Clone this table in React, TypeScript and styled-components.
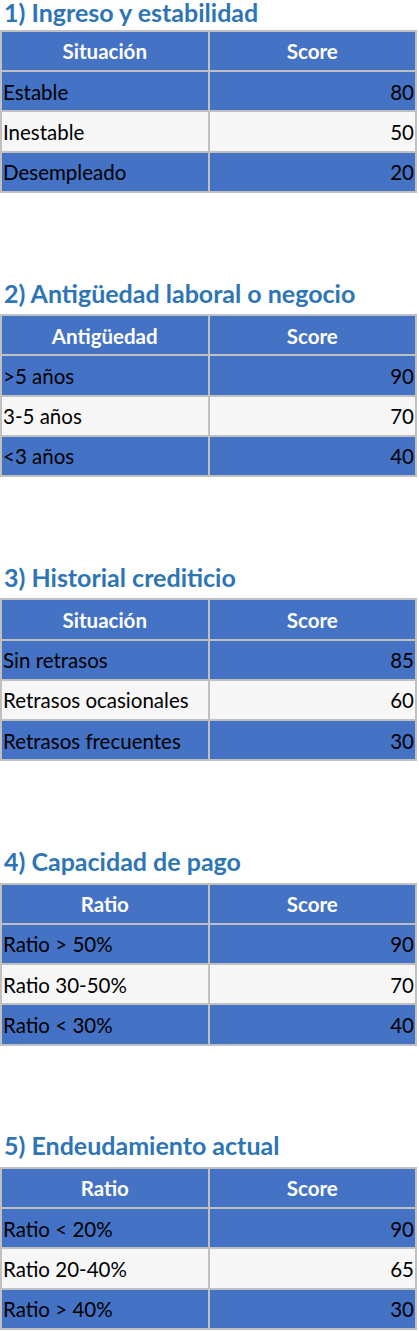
import React from 'react';
import styled, { createGlobalStyle } from 'styled-components';

type Section = {
	title: string;
	label: string;
	rows: [string, number][];
};

const sections: Section[] = [
	{
		title: '1) Ingreso y estabilidad',
		label: 'Situación',
		rows: [
			['Estable', 80],
			['Inestable', 50],
			['Desempleado', 20]
		]
	},
	{
		title: '2) Antigüedad laboral o negocio',
		label: 'Antigüedad',
		rows: [
			['>5 años', 90],
			['3-5 años', 70],
			['<3 años', 40]
		]
	},
	{
		title: '3) Historial crediticio',
		label: 'Situación',
		rows: [
			['Sin retrasos', 85],
			['Retrasos ocasionales', 60],
			['Retrasos frecuentes', 30]
		]
	},
	{
		title: '4) Capacidad de pago',
		label: 'Ratio',
		rows: [
			['Ratio > 50%', 90],
			['Ratio 30-50%', 70],
			['Ratio < 30%', 40]
		]
	},
	{
		title: '5) Endeudamiento actual',
		label: 'Ratio',
		rows: [
			['Ratio < 20%', 90],
			['Ratio 20-40%', 65],
			['Ratio > 40%', 30]
		]
	}
];

const App = () => (
	<>
		<GlobalStyle />
		<Page>
			{sections.map(s => (
				<Block key={s.title}>
					<Title>{s.title}</Title>
					<Table>
						<thead>
							<tr>
								<Head>{s.label}</Head>
								<Head>Score</Head>
							</tr>
						</thead>
						<tbody>
							{s.rows.map(([name, score], i) => (
								<tr key={name}>
									<Cell $light={i % 2 === 1}>{name}</Cell>
									<Cell $light={i % 2 === 1} $right>
										{score}
									</Cell>
								</tr>
							))}
						</tbody>
					</Table>
				</Block>
			))}
		</Page>
	</>
);

const GlobalStyle = createGlobalStyle`
	body {
		margin: 0;
		background: #ffffff;
		font-family: Lato, 'Liberation Sans', sans-serif;
	}
`;

const Page = styled.div`
	display: flex;
	flex-direction: column;
`;

const Title = styled.h2`
	margin: 0 0 8.4px 4px;
	font-size: 25px;
	line-height: 26px;
	font-weight: 700;
	color: #2e75b6;
	white-space: nowrap;
`;

const Block = styled.section`
	margin-bottom: 86.9px;

	&:first-child ${Title} {
		line-height: 24px;
		margin-bottom: 6px;
	}
`;

const Table = styled.table`
	width: 417px;
	border: 1px solid #c0c0c0;
	border-collapse: separate;
	border-spacing: 0;
	table-layout: fixed;
`;

const Head = styled.th`
	width: 50%;
	border: 1px solid #c0c0c0;
	background: #4472c4;
	color: #ffffff;
	font-size: 20.5px;
	font-weight: 700;
	line-height: 22px;
	padding: 8.4px 1px 7.85px;
	text-align: center;
`;

const Cell = styled.td<{ $light?: boolean; $right?: boolean }>`
	border: 1px solid #c0c0c0;
	background: ${p => (p.$light ? '#f7f7f7' : '#4472c4')};
	color: #000000;
	font-size: 20.5px;
	line-height: 22px;
	padding: 8.4px 1px 7.85px;
	text-align: ${p => (p.$right ? 'right' : 'left')};
	white-space: nowrap;
`;

export default App;
